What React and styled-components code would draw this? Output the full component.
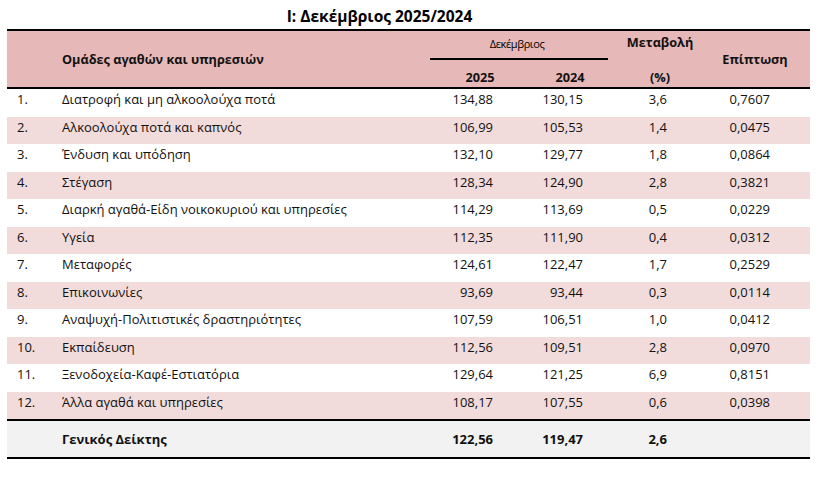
import React from "react";
import styled, { createGlobalStyle } from "styled-components";

const GlobalStyle = createGlobalStyle`
  body {
    margin: 0;
    background: #ffffff;
  }
`;

const rows = [
  ["1.", "Διατροφή και μη αλκοολούχα ποτά", "134,88", "130,15", "3,6", "0,7607"],
  ["2.", "Αλκοολούχα ποτά και καπνός", "106,99", "105,53", "1,4", "0,0475"],
  ["3.", "Ένδυση και υπόδηση", "132,10", "129,77", "1,8", "0,0864"],
  ["4.", "Στέγαση", "128,34", "124,90", "2,8", "0,3821"],
  ["5.", "Διαρκή αγαθά-Είδη νοικοκυριού και υπηρεσίες", "114,29", "113,69", "0,5", "0,0229"],
  ["6.", "Υγεία", "112,35", "111,90", "0,4", "0,0312"],
  ["7.", "Μεταφορές", "124,61", "122,47", "1,7", "0,2529"],
  ["8.", "Επικοινωνίες", "93,69", "93,44", "0,3", "0,0114"],
  ["9.", "Αναψυχή-Πολιτιστικές δραστηριότητες", "107,59", "106,51", "1,0", "0,0412"],
  ["10.", "Εκπαίδευση", "112,56", "109,51", "2,8", "0,0970"],
  ["11.", "Ξενοδοχεία-Καφέ-Εστιατόρια", "129,64", "121,25", "6,9", "0,8151"],
  ["12.", "Άλλα αγαθά και υπηρεσίες", "108,17", "107,55", "0,6", "0,0398"],
];

// right padding of each numeric column, so the figures line up like the sheet
const numPad = [26, 25, 38, 40];

const Page = styled.div`
  width: 803px;
  padding: 6px 0 0 7px;
  font-family: "Open Sans", "Noto Sans", "DejaVu Sans", sans-serif;
  color: #111;
`;

const Title = styled.h1`
  margin: 0;
  height: 23px;
  padding-right: 58px;
  font-size: 15.5px;
  line-height: 20px;
  font-weight: 700;
  text-align: center;
  color: #000;
`;

const Table = styled.table`
  width: 803px;
  table-layout: fixed;
  border-collapse: separate;
  border-spacing: 0;
  font-size: 13px;
`;

const HeadRow = styled.tr`
  height: ${({ $h }) => $h}px;
`;

const HeadCell = styled.th`
  padding: ${({ $pad }) => $pad || "0"};
  background: #e6b8b7;
  font-size: 12.7px;
  font-weight: 700;
  text-align: ${({ $align }) => $align || "center"};
  vertical-align: middle;
  line-height: 18px;
  border-top: ${({ $top }) => ($top ? "2px solid #000" : "none")};
  border-bottom: ${({ $bottom }) => ($bottom ? "2px solid #000" : "none")};
  color: #111;
`;

const MonthLabel = styled.span`
  font-size: 11px;
  font-weight: 400;
  letter-spacing: -0.4px;
  color: #000;
`;

const TwoLines = styled.span`
  display: flex;
  flex-direction: column;
  align-items: center;
  gap: 17px;
`;

const BodyRow = styled.tr`
  height: 27.5px;
  background: ${({ $shaded }) => ($shaded ? "#f2dcdb" : "#ffffff")};
`;

const Cell = styled.td`
  padding: 0 ${({ $pr }) => $pr || 0}px 7px ${({ $pl }) => $pl || 0}px;
  text-align: ${({ $num }) => ($num ? "right" : "left")};
  vertical-align: middle;
  line-height: 18px;
  white-space: nowrap;
`;

const TotalRow = styled.tr`
  height: 40px;
  background: #f2f2f2;
`;

const TotalCell = styled.td`
  padding: 0 ${({ $pr }) => $pr || 0}px 0 ${({ $pl }) => $pl || 0}px;
  text-align: ${({ $num }) => ($num ? "right" : "left")};
  vertical-align: middle;
  font-weight: 700;
  line-height: 18px;
  border-top: 2px solid #000;
  border-bottom: 2px solid #000;
`;

export default function App() {
  return (
    <>
      <GlobalStyle />
      <Page>
        <Title>I: Δεκέμβριος 2025/2024</Title>
        <Table>
          <colgroup>
            <col style={{ width: 55 }} />
            <col style={{ width: 368 }} />
            <col style={{ width: 89 }} />
            <col style={{ width: 89 }} />
            <col style={{ width: 97 }} />
            <col style={{ width: 105 }} />
          </colgroup>
          <thead>
            <HeadRow $h={31}>
              <HeadCell colSpan={2} rowSpan={2} $top $bottom $align="left" $pad="0 0 0 55px">
                Ομάδες αγαθών και υπηρεσιών
              </HeadCell>
              <HeadCell colSpan={2} $top $bottom $pad="0 4px 2px 0">
                <MonthLabel>Δεκέμβριος</MonthLabel>
              </HeadCell>
              <HeadCell rowSpan={2} $top $bottom $pad="0 0 0 7px">
                <TwoLines>
                  <span>Μεταβολή</span>
                  <span>(%)</span>
                </TwoLines>
              </HeadCell>
              <HeadCell rowSpan={2} $top $bottom $pad="0 5px 0 0">
                Επίπτωση
              </HeadCell>
            </HeadRow>
            <HeadRow $h={29}>
              <HeadCell $bottom $pad="6px 0 0 11px">2025</HeadCell>
              <HeadCell $bottom $pad="6px 0 0 13px">2024</HeadCell>
            </HeadRow>
          </thead>
          <tbody>
            {rows.map(([no, name, ...nums], i) => (
              <BodyRow key={no} $shaded={i % 2 === 1}>
                <Cell $pl={10}>{no}</Cell>
                <Cell>{name}</Cell>
                {nums.map((v, j) => (
                  <Cell key={j} $num $pr={numPad[j]}>
                    {v}
                  </Cell>
                ))}
              </BodyRow>
            ))}
            <TotalRow>
              <TotalCell />
              <TotalCell>Γενικός Δείκτης</TotalCell>
              <TotalCell $num $pr={numPad[0]}>122,56</TotalCell>
              <TotalCell $num $pr={numPad[1]}>119,47</TotalCell>
              <TotalCell $num $pr={numPad[2]}>2,6</TotalCell>
              <TotalCell />
            </TotalRow>
          </tbody>
        </Table>
      </Page>
    </>
  );
}
